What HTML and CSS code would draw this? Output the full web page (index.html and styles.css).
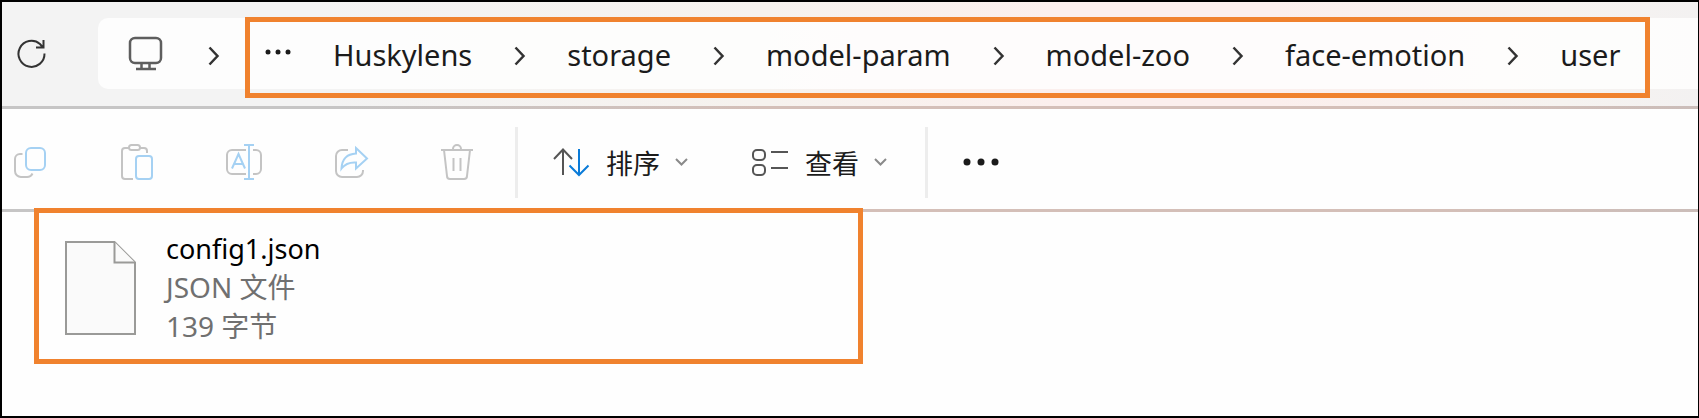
FILE: index.html
```
<!DOCTYPE html>
<html lang="zh-CN">
<head>
    <meta charset="UTF-8">
    <meta name="viewport" content="width=device-width, initial-scale=1.0">
    <title>user</title>
    <link rel="stylesheet" href="styles.css">
</head>
<body>
    <div class="window">
        <header class="address-bar">
            <button class="icon-button" type="button" aria-label="刷新">
                <svg class="icon-refresh" viewBox="0 0 30 30">
                    <path d="M27.500 14.500A13 13 0 1 1 23 5L26 8.500M26.500 1V8.500H19"/>
                </svg>
            </button>
            <div class="address-field">
                <button class="icon-button" type="button" aria-label="此电脑">
                    <svg class="icon-monitor" viewBox="0 0 34 34">
                        <rect x="1" y="1" width="31" height="25" rx="5"/>
                        <path d="M12.500 26v6M20.500 26v6M7 32H27"/>
                    </svg>
                </button>
                <svg class="chevron" viewBox="0 0 11 20"><path d="M1.500 1.500L9.500 10L1.500 18.500"/></svg>
                <nav class="breadcrumb highlight">
                    <button class="icon-button" type="button" aria-label="更多">
                        <svg class="icon-crumb-dots" viewBox="0 0 26 6">
                            <circle cx="3" cy="3" r="2.500"/>
                            <circle cx="13" cy="3" r="2.500"/>
                            <circle cx="23" cy="3" r="2.500"/>
                        </svg>
                    </button>
                    <a href="#">Huskylens</a>
                    <svg class="chevron" viewBox="0 0 11 20"><path d="M1.500 1.500L9.500 10L1.500 18.500"/></svg>
                    <a href="#">storage</a>
                    <svg class="chevron" viewBox="0 0 11 20"><path d="M1.500 1.500L9.500 10L1.500 18.500"/></svg>
                    <a href="#">model-param</a>
                    <svg class="chevron" viewBox="0 0 11 20"><path d="M1.500 1.500L9.500 10L1.500 18.500"/></svg>
                    <a href="#">model-zoo</a>
                    <svg class="chevron" viewBox="0 0 11 20"><path d="M1.500 1.500L9.500 10L1.500 18.500"/></svg>
                    <a href="#">face-emotion</a>
                    <svg class="chevron" viewBox="0 0 11 20"><path d="M1.500 1.500L9.500 10L1.500 18.500"/></svg>
                    <a href="#">user</a>
                </nav>
            </div>
        </header>

        <div class="toolbar">
            <div class="tool-group">
                <button class="icon-button" type="button" aria-label="复制" disabled>
                    <svg class="tool-icon" viewBox="0 0 36 36">
                        <path class="gray" d="M9.500 10H7a5 5 0 0 0-5 5v12a6 6 0 0 0 6 6h6a6 6 0 0 0 5.500-3.500"/>
                        <rect class="blue" x="13" y="4" width="19" height="22" rx="5"/>
                    </svg>
                </button>
                <button class="icon-button" type="button" aria-label="粘贴" disabled>
                    <svg class="tool-icon" viewBox="0 0 36 36">
                        <path class="gray" d="M9 4H5a3 3 0 0 0-3 3v25a3 3 0 0 0 3 3h8M20 4h4a3 3 0 0 1 3 3v2"/>
                        <rect class="gray" x="9" y="1" width="11" height="5" rx="2.500"/>
                        <rect class="blue" x="16" y="12" width="16" height="23" rx="3"/>
                    </svg>
                </button>
                <button class="icon-button" type="button" aria-label="重命名" disabled>
                    <svg class="tool-icon" viewBox="0 0 36 36">
                        <path class="gray" d="M19 6H5a5 5 0 0 0-5 5v14a5 5 0 0 0 5 5h14M26 6h3a5 5 0 0 1 5 5v14a5 5 0 0 1-5 5h-3"/>
                        <path class="blue" d="M17 1h10M22 1v34M17 35h10M5 24.500L11.500 10L18 24.500M7.500 20h8"/>
                    </svg>
                </button>
                <button class="icon-button" type="button" aria-label="共享" disabled>
                    <svg class="tool-icon" viewBox="0 0 36 36">
                        <path class="gray" d="M14 6H8a6 6 0 0 0-6 6v15a6 6 0 0 0 6 6h15a6 6 0 0 0 6-6v-1"/>
                        <path class="blue" d="M22 4l11 10.500L22 24.500v-6c-7-.500-11 1.500-14.500 6C8 15.500 13 10 22 9.500z"/>
                    </svg>
                </button>
                <button class="icon-button" type="button" aria-label="删除" disabled>
                    <svg class="tool-icon" viewBox="0 0 36 36">
                        <path class="gray" d="M0 6h32M12 5a4 4 0 0 1 8 0M3 6l3 26a3 3 0 0 0 3 3h14a3 3 0 0 0 3-3l3-26M12.500 14v13M19.500 14v13"/>
                    </svg>
                </button>
            </div>
            <span class="separator"></span>
            <div class="menu-group">
                <button class="menu-button" type="button">
                    <svg class="tool-icon" viewBox="0 0 36 36">
                        <path class="dark" d="M10 31V6M1 15l9-9.500L19 15"/>
                        <path class="accent" d="M26 5v26M16.500 21.500L26 31l9.500-9.500"/>
                    </svg>
                    <span>排序</span>
                    <svg class="menu-arrow" viewBox="0 0 13 8"><path d="M1 1l5.500 5.500L12 1"/></svg>
                </button>
                <button class="menu-button" type="button">
                    <svg class="tool-icon" viewBox="0 0 36 36">
                        <rect class="dark" x="1" y="6" width="12" height="10" rx="4"/>
                        <rect class="dark" x="1" y="21" width="12" height="10" rx="4"/>
                        <path class="dark" d="M19 8h17M19 24h17"/>
                    </svg>
                    <span>查看</span>
                    <svg class="menu-arrow" viewBox="0 0 13 8"><path d="M1 1l5.500 5.500L12 1"/></svg>
                </button>
            </div>
            <span class="separator"></span>
            <button class="icon-button" type="button" aria-label="查看更多">
                <svg class="icon-dots" viewBox="0 0 36 8">
                    <circle cx="4" cy="4" r="3.500"/>
                    <circle cx="18" cy="4" r="3.500"/>
                    <circle cx="32" cy="4" r="3.500"/>
                </svg>
            </button>
        </div>

        <main class="file-list">
            <div class="file-item">
                <svg class="icon-file" viewBox="0 0 71 94">
                    <path d="M1 1H49.500L70 21.500V93H1z"/>
                    <path d="M49.500 1V21.500H70"/>
                </svg>
                <div class="file-info">
                    <div class="file-name">config1.json</div>
                    <div>JSON 文件</div>
                    <div>139 字节</div>
                </div>
            </div>
        </main>
    </div>
</body>
</html>
```
FILE: styles.css
```
* {
    box-sizing: border-box;
}
body {
    margin: 0;
    font-family: "Noto Sans", "Noto Sans CJK SC", sans-serif;
    font-size: 27px;
    color: #1b1b1b;
}
button {
    font: inherit;
    color: inherit;
    background: none;
    border: none;
    padding: 0;
}
svg {
    display: block;
    flex: none;
    fill: none;
    stroke: #333;
    stroke-width: 2;
    overflow: visible;
}
.window {
    min-height: 100vh;
    border: 2px solid #000;
    border-right-width: 1px;
    background: #fefefe;
}
.icon-button {
    flex: none;
}

/* address bar */
.address-bar {
    display: flex;
    align-items: center;
    gap: 51px;
    padding: 16px 0 17px 15px;
    background: linear-gradient(90deg, #f3f3f3 18%, #f6f2ee 45%, #fbefed 62%, #fbefed 75%, #f6f3f0 92%, #f3f1f1);
}
.address-field {
    flex: 1;
    display: flex;
    align-items: center;
    height: 71px;
    background: rgba(255, 255, 255, 0.8);
    border-radius: 10px 0 0 10px;
    padding-left: 31px;
}
.address-field > .chevron {
    margin: 4px 26px 0 45px;
}
.icon-refresh {
    width: 30px;
    height: 30px;
}
.icon-monitor {
    width: 34px;
    height: 34px;
    stroke: #5e5e5e;
    stroke-width: 2.5;
}
.chevron {
    width: 11px;
    height: 20px;
    stroke-width: 2.5;
}
.breadcrumb {
    position: relative;
    flex: 1;
    display: flex;
    align-items: center;
    gap: 42px;
    height: 71px;
    margin-right: 48px;
    padding: 1px 0 0 20px;
    font-size: 29px;
    white-space: nowrap;
}
.breadcrumb .icon-button {
    margin-bottom: 5px;
}
.breadcrumb .chevron {
    margin-top: 3px;
}
.highlight::after {
    content: "";
    position: absolute;
    inset: -1px 0 -9px;
    border: 5px solid #f0822e;
    pointer-events: none;
}
.breadcrumb a {
    color: inherit;
    text-decoration: none;
}
.icon-crumb-dots {
    width: 26px;
    height: 6px;
    fill: #1b1b1b;
    stroke: none;
}

/* toolbar */
.toolbar {
    display: flex;
    align-items: center;
    height: 106px;
    padding: 6px 0 0 11px;
    border: solid;
    border-width: 3px 0;
    border-image: linear-gradient(90deg, #c6c5c5 20%, #d4bfb8 45%, #d4bfb8 85%, #cbbdb9) 1;
}
.tool-group {
    display: flex;
    gap: 71px;
}
.tool-icon {
    width: 36px;
    height: 36px;
}
.gray {
    stroke: #c4c4c4;
}
.blue {
    stroke: #a5d1f3;
}
.dark {
    stroke: #555;
}
.accent {
    stroke: #0a7bd8;
}
.separator {
    width: 3px;
    height: 71px;
    background: #ededed;
    margin: 0 35px 0 38px;
}
.menu-group {
    display: flex;
    gap: 64px;
}
.menu-button {
    display: flex;
    align-items: center;
}
.menu-button span {
    margin: 0 15px 0 17px;
}
.menu-arrow {
    width: 13px;
    height: 8px;
    stroke: #8a8a8a;
}
.icon-dots {
    width: 36px;
    height: 8px;
    fill: #1b1b1b;
    stroke: none;
}

/* files */
.file-list {
    padding-left: 32px;
}
.file-item {
    position: relative;
    display: flex;
    align-items: center;
    gap: 30px;
    width: calc(50% - 3px);
    height: 156px;
    margin-top: -4px;
    padding: 4px 0 0 26px;
    border: 5px solid #f0822e;
}
.icon-file {
    width: 71px;
    height: 94px;
    fill: #fafafa;
    stroke: #9a9a98;
}
.file-info {
    font-size: 28px;
    line-height: 39px;
    padding-bottom: 2px;
    color: #707070;
}
.file-name {
    font-size: 27px;
    color: #000;
}
```
